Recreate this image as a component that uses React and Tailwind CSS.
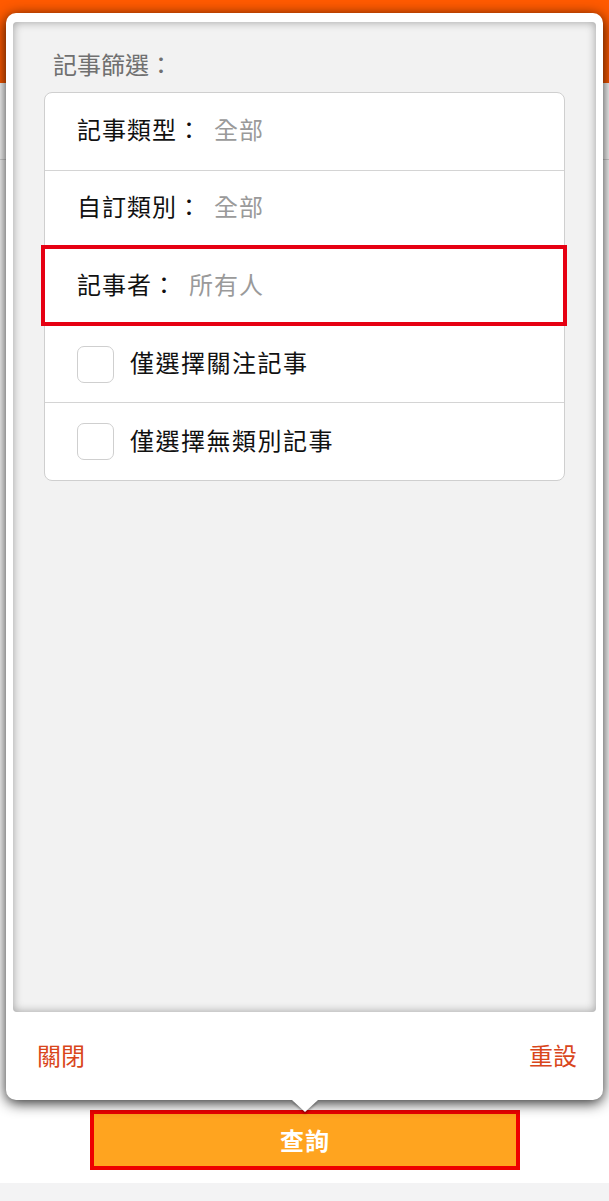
import React, { useState } from "react";

const font = { fontFamily: '"Noto Sans CJK TC", "Noto Sans", sans-serif' };

function SelectRow({ label, value, highlight, tall }) {
  return (
    <div
      className={
        "relative flex items-center pl-[32px] pb-[6px] border-b border-[#d4d4d4] " +
        (tall ? "h-[78px]" : "h-[77px]")
      }
    >
      <span className="text-[24px] tracking-[1px] text-[#111]">{label}：</span>
      <span className="ml-[12px] text-[24px] tracking-[1px] text-[#9a9a9a]">{value}</span>
      {highlight && (
        <div className="absolute -left-[4px] -right-[3px] -top-[3px] -bottom-[1px] border-4 border-[#e60012]" />
      )}
    </div>
  );
}

function CheckRow({ label, checked, onToggle, last }) {
  return (
    <div
      onClick={onToggle}
      className={
        "flex items-center h-[77px] pl-[32px] cursor-pointer " +
        (last ? "" : "border-b border-[#d4d4d4]")
      }
    >
      <div className="w-[37px] h-[37px] rounded-[7px] border border-[#cfcfcf] bg-white flex items-center justify-center">
        {checked && <span className="text-[#ff6600] text-[22px] leading-none">✓</span>}
      </div>
      <span className="ml-[16px] mb-[4px] text-[24px] tracking-[1.5px] text-[#111]">{label}</span>
    </div>
  );
}

export default function App() {
  const [followOnly, setFollowOnly] = useState(false);
  const [noCategory, setNoCategory] = useState(false);

  return (
    <div className="relative h-[1201px] w-[609px] overflow-hidden bg-white flex flex-col" style={font}>
      {/* page behind the popup */}
      <div className="h-[83px] bg-[#ff5a00]" />
      <div className="h-[77px] border-b border-[#d8d8d8]" />
      <div className="flex-1" />
      <div className="ml-[90px] mb-[13px] w-[430px] h-[60px] border-4 border-[#ee0000] bg-[#ffa41f] flex items-center justify-center">
        <span className="text-[24px] font-bold tracking-[1px] text-white">查詢</span>
      </div>
      <div className="h-[18px] bg-[#f3f3f4]" />

      {/* filter popup */}
      <div className="absolute left-[6px] top-[13px] w-[597px] h-[1087px] bg-white rounded-[10px] shadow-[0_3px_14px_rgba(0,0,0,0.85)] flex flex-col">
        <div className="mx-[7px] mt-[9px] h-[990px] bg-[#f2f2f2] rounded-[4px] shadow-[inset_0_0_10px_rgba(0,0,0,0.35)] px-[31px]">
          <div className="pt-[27px] pl-[9px] text-[24px] leading-[30px] text-[#707070]">記事篩選：</div>
          <div className="mt-[13px] bg-white border border-[#cfcfcf] rounded-[8px]">
            <SelectRow label="記事類型" value="全部" tall />
            <SelectRow label="自訂類別" value="全部" />
            <SelectRow label="記事者" value="所有人" highlight tall />
            <CheckRow
              label="僅選擇關注記事"
              checked={followOnly}
              onToggle={() => setFollowOnly(!followOnly)}
            />
            <CheckRow
              label="僅選擇無類別記事"
              checked={noCategory}
              onToggle={() => setNoCategory(!noCategory)}
              last
            />
          </div>
        </div>
        <div className="flex-1 flex items-center justify-between pl-[31px] pr-[26px] pb-[2px]">
          <span className="text-[24px] text-[#d9461b]">關閉</span>
          <span className="text-[24px] text-[#d9461b]">重設</span>
        </div>
        {/* arrow */}
        <div className="absolute left-[286px] -bottom-[12px] w-0 h-0 border-l-[13px] border-r-[13px] border-t-[12px] border-l-transparent border-r-transparent border-t-white drop-shadow-[0_2px_1px_rgba(0,0,0,0.35)]" />
      </div>
    </div>
  );
}
